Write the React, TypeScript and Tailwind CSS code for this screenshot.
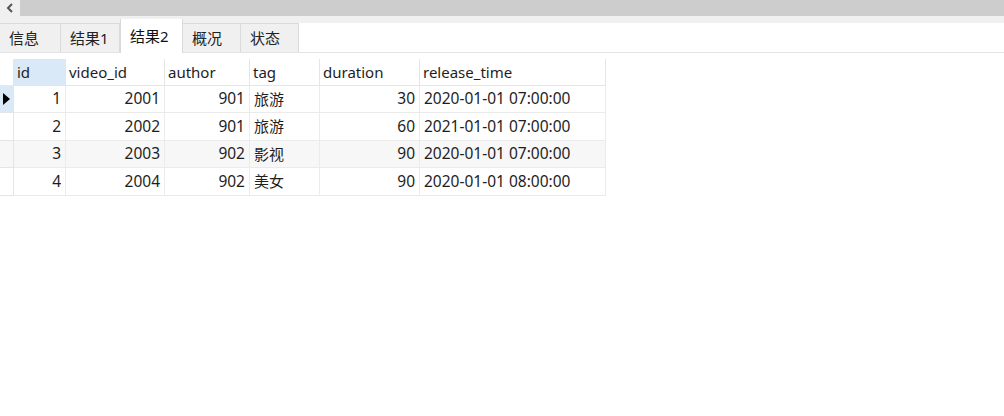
import React from "react";

const font = { fontFamily: '"Noto Sans", "Noto Sans CJK SC", sans-serif' };

type Col = { key: string; label: string; w: string; align: "l" | "r" };
const cols: Col[] = [
  { key: "id", label: "id", w: "w-[52px]", align: "r" },
  { key: "video_id", label: "video_id", w: "w-[99px]", align: "r" },
  { key: "author", label: "author", w: "w-[85px]", align: "r" },
  { key: "tag", label: "tag", w: "w-[70px]", align: "l" },
  { key: "duration", label: "duration", w: "w-[100px]", align: "r" },
  { key: "release_time", label: "release_time", w: "w-[186px]", align: "l" },
];

const rows = [
  { id: "1", video_id: "2001", author: "901", tag: "旅游", duration: "30", release_time: "2020-01-01 07:00:00" },
  { id: "2", video_id: "2002", author: "901", tag: "旅游", duration: "60", release_time: "2021-01-01 07:00:00" },
  { id: "3", video_id: "2003", author: "902", tag: "影视", duration: "90", release_time: "2020-01-01 07:00:00" },
  { id: "4", video_id: "2004", author: "902", tag: "美女", duration: "90", release_time: "2020-01-01 08:00:00" },
];

const rowH = ["h-[27px]", "h-[28px]", "h-[27px]", "h-[28px]"];

const tabs = [
  { label: "信息", w: "w-[61px]" },
  { label: "结果1", w: "w-[59px]" },
  { label: "结果2", w: "w-[63px]", active: true },
  { label: "概况", w: "w-[58px]" },
  { label: "状态", w: "w-[58px]" },
];

export default function App() {
  return (
    <div className="w-[1004px] h-[416px] bg-white text-[15px] text-[#1e1e1e] overflow-hidden" style={font}>
      {/* top scrollbar */}
      <div className="flex h-[16px]">
        <div className="w-[20px] h-full bg-[#f0f0f0] flex items-center justify-center">
          <svg width="8" height="10" viewBox="0 0 8 10">
            <polyline points="6,1 2,5 6,9" fill="none" stroke="#555" strokeWidth="2" />
          </svg>
        </div>
        <div className="flex-1 bg-[#cdcdcd]" />
      </div>
      <div className="h-[7px] bg-[#f0f0f0]" />
      {/* tabs */}
      <div className="flex h-[30px] border-b border-[#e3e3e3] items-end">
        {tabs.map((t) =>
          t.active ? (
            <div
              key={t.label}
              className={`${t.w} h-[34px] -mt-[4px] bg-white border-x border-[#dadada] flex items-center pl-[9px] text-[#111] relative top-[1px]`}
            >
              {t.label}
            </div>
          ) : (
            <div
              key={t.label}
              className={`${t.w} h-full bg-[#f0f0f0] border-t border-r border-[#dadada] flex items-center pl-[9px] text-[#222]`}
            >
              {t.label}
            </div>
          )
        )}
      </div>
      {/* grid */}
      <div className="mt-[6px] flex flex-col w-fit">
        <div className="flex h-[27px]">
          <div className="w-[14px] border-r border-[#e5e5e5] border-b border-b-[#e8e8e8]" />
          {cols.map((c) => (
            <div
              key={c.key}
              className={`${c.w} border-r border-b border-[#e5e5e5] flex items-center pl-[3px] ${c.key === "id" ? "bg-[#d9e9f7]" : "bg-white"}`}
            >
              {c.label}
            </div>
          ))}
        </div>
        {rows.map((r, ri) => (
          <div key={ri} className={`flex ${rowH[ri]} ${ri === 2 ? "bg-[#f7f7f7]" : "bg-white"}`}>
            <div
              className={`w-[14px] border-r border-b border-[#e5e5e5] flex items-center justify-center ${ri === 0 ? "bg-[#d9e9f7]" : ""}`}
            >
              {ri === 0 && (
                <svg width="7" height="12" viewBox="0 0 7 12">
                  <polygon points="0,0 7,6 0,12" fill="#000" />
                </svg>
              )}
            </div>
            {cols.map((c) => (
              <div
                key={c.key}
                className={`${c.w} border-r border-b border-[#ebebeb] flex items-center ${
                  c.key === "tag" ? "text-[15px]" : "text-[15.5px]"
                } ${c.align === "r" ? "justify-end pr-[4px]" : "pl-[4px]"}`}
              >
                {(r as any)[c.key]}
              </div>
            ))}
          </div>
        ))}
      </div>
    </div>
  );
}
